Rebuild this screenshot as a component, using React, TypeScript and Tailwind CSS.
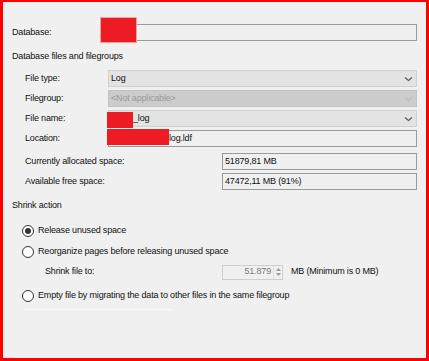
import React from "react";

function Chevron({ muted }: { muted?: boolean }) {
  return (
    <svg width="9" height="6" viewBox="0 0 9 6" className="mr-[3px] shrink-0">
      <path d="M1 1.5 L4.5 4.5 L8 1.5" fill="none" stroke={muted ? "#bdbdbd" : "#555555"} strokeWidth="1.1" />
    </svg>
  );
}

function Radio({ checked, label }: { checked?: boolean; label: string }) {
  return (
    <div className="flex items-center h-[14px] pl-[10px]">
      <div className="w-[12px] h-[12px] rounded-full border border-[#333333] bg-white flex items-center justify-center shrink-0">
        {checked && <div className="w-[6px] h-[6px] rounded-full bg-[#333333]" />}
      </div>
      <span className="ml-[4px]">{label}</span>
    </div>
  );
}

function Field({ label, children, pad = 13, labelW = 83 }: { label: string; children: React.ReactNode; pad?: number; labelW?: number }) {
  return (
    <div className="flex items-center h-[17px]" style={{ paddingLeft: pad }}>
      <span className="shrink-0" style={{ width: labelW }}>{label}</span>
      {children}
    </div>
  );
}

export default function App() {
  return (
    <div className="relative w-[429px] h-[361px] bg-[#f0f0f0] border-l-[3px] border-t-[2px] border-r-[3px] border-b-[3px] border-[#ff0000] text-[9px] tracking-[-0.18px] text-[#111111] font-['Liberation_Sans',Arial,sans-serif] pl-[9px] pr-[9px] overflow-hidden">
      {/* Database */}
      <div className="flex items-center h-[17px] mt-[22px]">
        <span className="w-[88px] shrink-0">Database:</span>
        <div className="flex-1 h-full border border-[#9a9a9a] bg-[#f0f0f0]" />
      </div>

      <div className="flex items-center h-[14px] mt-[9px]">Database files and filegroups</div>

      <div className="flex flex-col gap-[3px] mt-[6px]">
        <Field label="File type:">
          <div className="flex-1 h-full flex items-center justify-between border border-[#d0d0d0] bg-[#e3e3e3] pl-[2px]">
            <span>Log</span>
            <Chevron />
          </div>
        </Field>
        <Field label="Filegroup:">
          <div className="flex-1 h-full flex items-center justify-between border border-[#c4c4c4] bg-[#cccccc] pl-[2px]">
            <span className="text-[#9a9a9a]">&lt;Not applicable&gt;</span>
            <Chevron muted />
          </div>
        </Field>
        <Field label="File name:">
          <div className="flex-1 h-full flex items-center justify-between border border-[#d0d0d0] bg-[#e3e3e3] pl-[24px]">
            <span>_log</span>
            <Chevron />
          </div>
        </Field>
        <Field label="Location:">
          <div className="flex-1 h-full flex items-center border border-[#9a9a9a] bg-[#f0f0f0] pl-[60px]">
            <span>log.ldf</span>
          </div>
        </Field>
      </div>

      <div className="flex flex-col gap-[3px] mt-[6px]">
        <Field label="Currently allocated space:" labelW={197}>
          <div className="flex-1 h-full flex items-center border border-[#9a9a9a] bg-[#f0f0f0] pl-[2px]">
            <span>51879,81 MB</span>
          </div>
        </Field>
        <Field label="Available free space:" labelW={197}>
          <div className="flex-1 h-full flex items-center border border-[#9a9a9a] bg-[#f0f0f0] pl-[2px]">
            <span>47472,11 MB (91%)</span>
          </div>
        </Field>
      </div>

      <div className="flex items-center h-[14px] mt-[9px]">Shrink action</div>

      <div className="mt-[11px]">
        <Radio checked label="Release unused space" />
      </div>
      <div className="mt-[7px]">
        <Radio label="Reorganize pages before releasing unused space" />
      </div>

      <div className="flex items-center h-[16px] mt-[5px] pl-[33px]">
        <span className="w-[177px] shrink-0">Shrink file to:</span>
        <div className="w-[61px] h-[15px] flex items-center border border-[#cfcfcf] bg-[#f0f0f0]">
          <span className="flex-1 text-right pr-[2px] text-[#7a7a7a]">51.879</span>
          <div className="w-[9px] h-full flex flex-col items-center justify-center border-l border-[#dcdcdc] gap-[2px]">
            <svg width="5" height="3" viewBox="0 0 5 3"><path d="M0 3 L2.5 0 L5 3Z" fill="#9a9a9a" /></svg>
            <svg width="5" height="3" viewBox="0 0 5 3"><path d="M0 0 L2.5 3 L5 0Z" fill="#9a9a9a" /></svg>
          </div>
        </div>
        <span className="ml-[8px]">MB (Minimum is 0 MB)</span>
      </div>

      <div className="mt-[9px]">
        <Radio label="Empty file by migrating the data to other files in the same filegroup" />
      </div>

      <div className="ml-[10px] mt-[6px] w-[151px] h-px bg-[#f9f9f9]" />

      {/* redactions */}
      <div className="absolute left-[97px] top-[15px] w-[37px] h-[26px] bg-[#ed1c24] border border-[#f3a0a3]" />
      <div className="absolute left-[104px] top-[110px] w-[26px] h-[16px] bg-[#ed1c24]" />
      <div className="absolute left-[104px] top-[127px] w-[62px] h-[16px] bg-[#ed1c24]" />
    </div>
  );
}
